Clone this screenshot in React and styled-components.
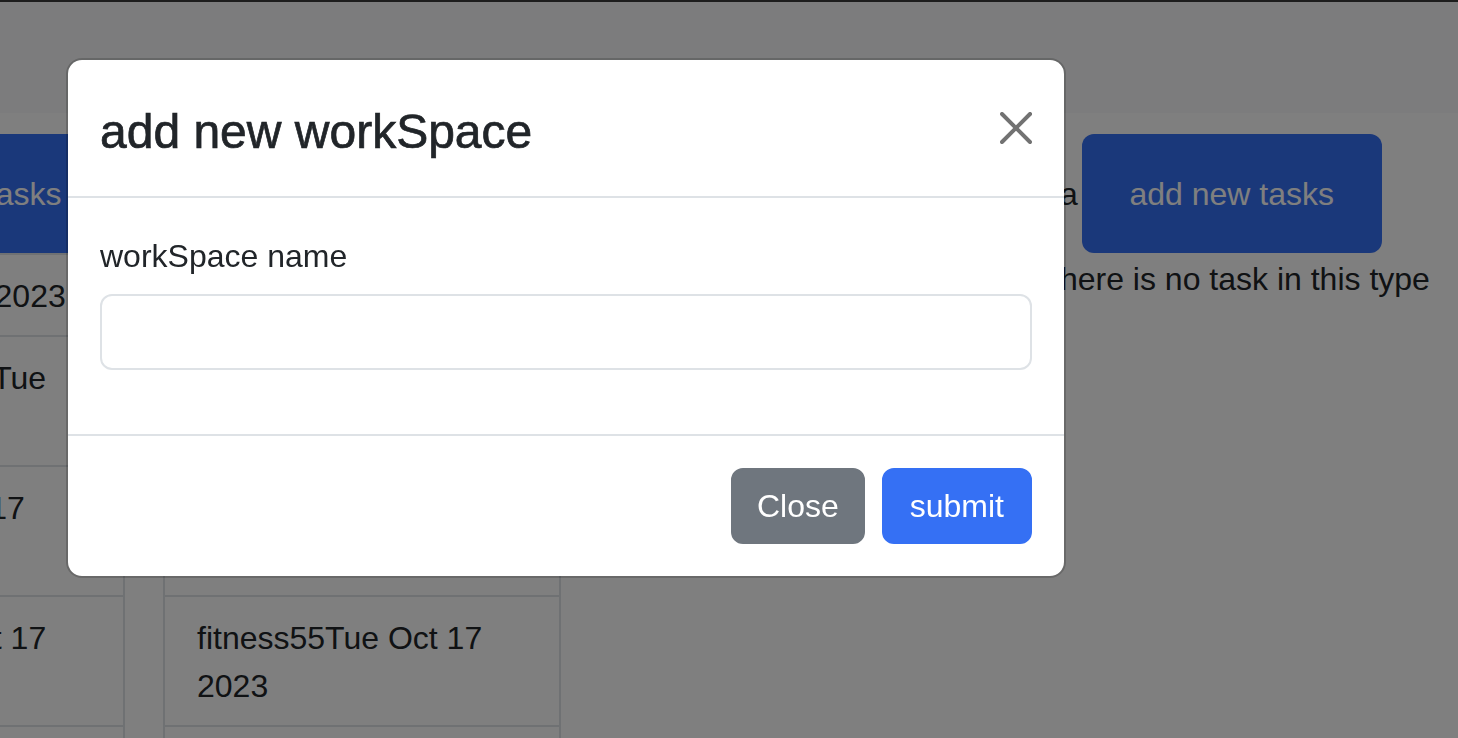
import React from "react";
import styled, { createGlobalStyle } from "styled-components";

const GlobalStyle = createGlobalStyle`
  html, body {
    margin: 0;
    padding: 0;
    background: #fff;
  }
  body {
    font-family: "Liberation Sans", Arial, sans-serif;
    font-size: 32px;
    line-height: 1.5;
    color: #212529;
    overflow: hidden;
  }
  * {
    box-sizing: border-box;
  }
`;

const Page = styled.div`
  width: 1458px;
  height: 738px;
  overflow: hidden;
`;

const NavBar = styled.nav`
  height: 113px;
  background: #f8f9fa;
  border-top: 2px solid #3a3a3a;
`;

// board is scrolled sideways, first column is partly off screen
const Board = styled.div`
  display: flex;
  align-items: flex-start;
  gap: 38px;
  margin-left: -273px;
  padding: 21px 9px 0 0;
`;

const Column = styled.section`
  flex: 0 0 398px;
  display: flex;
  flex-direction: column;
  margin-left: ${({ $push }) => ($push ? "auto" : "0")};
`;

const ColumnHeader = styled.div`
  display: flex;
  align-items: center;
  gap: 4px;
`;

const ColumnTitle = styled.span`
  white-space: nowrap;
`;

const AddButton = styled.button`
  flex: 0 0 300px;
  height: 119px;
  border: none;
  border-radius: 12px;
  background: #3570f4;
  color: #fff;
  font-family: inherit;
  font-size: 32px;
  line-height: 48px;
`;

const TaskList = styled.ul`
  margin: 0;
  padding: 0;
  list-style: none;
`;

const TaskItem = styled.li`
  padding: 17px 32px 15px;
  background: #fff;
  border: 2px solid #dee2e6;
  & + & {
    border-top-width: 0;
  }
`;

const EmptyNote = styled.p`
  margin: 0;
  padding-top: 2px;
  white-space: nowrap;
`;

const Overlay = styled.div`
  position: fixed;
  inset: 0;
  background: rgba(0, 0, 0, 0.5);
  padding: 58px 0 0 66px;
`;

const Dialog = styled.div`
  width: 1000px;
  background: #fff;
  background-clip: padding-box;
  border: 2px solid rgba(0, 0, 0, 0.175);
  border-radius: 16px;
`;

const DialogHeader = styled.div`
  display: flex;
  align-items: center;
  justify-content: space-between;
  padding: 32px;
  border-bottom: 2px solid #dee2e6;
`;

const DialogTitle = styled.h4`
  margin: 0;
  padding-top: 4px;
  height: 72px;
  font-size: 48px;
  line-height: 72px;
  font-weight: 500;
  -webkit-text-stroke: 0.7px #212529;
`;

const CloseX = styled.button`
  width: 48px;
  height: 48px;
  padding: 8px;
  margin-right: -8px;
  border: none;
  background: transparent;
  opacity: 0.55;
  display: flex;
  svg {
    width: 32px;
    height: 32px;
  }
`;

const DialogBody = styled.div`
  padding: 32px;
`;

const FieldGroup = styled.div`
  margin-bottom: 32px;
`;

const FieldLabel = styled.label`
  display: block;
  padding-top: 2px;
  height: 48px;
  margin-bottom: 16px;
`;

const TextInput = styled.input`
  display: block;
  width: 100%;
  height: 76px;
  padding: 12px 24px;
  border: 2px solid #dee2e6;
  border-radius: 12px;
  font-family: inherit;
  font-size: 32px;
  outline: none;
`;

const DialogFooter = styled.div`
  display: flex;
  justify-content: flex-end;
  gap: 17px;
  padding: 32px;
  border-top: 2px solid #dee2e6;
`;

const ActionButton = styled.button`
  padding: 12px ${({ $wide }) => ($wide ? "26px" : "24px")};
  border: 2px solid ${({ $tone }) => $tone};
  background: ${({ $tone }) => $tone};
  border-radius: 12px;
  color: #fff;
  font-family: inherit;
  font-size: 32px;
  line-height: 48px;
`;

const columns = [
  {
    title: "doing",
    tasks: [
      "workTue Oct 17 2023",
      "finish homeworkTue Oct 17 2023",
      "readingTue Oct 17 2023",
      "fitness55Tue Oct 17 2023",
      "workTue Oct 17 2023",
    ],
  },
  {
    title: "todo",
    tasks: [
      "workTue Oct 17 2023",
      "finish homeworkTue Oct 17 2023",
      "readingTue Oct 17 2023",
      "fitness55Tue Oct 17 2023",
      "workTue Oct 17 2023",
    ],
  },
  { title: "ta", tasks: [] },
];

const App = () => {
  return (
    <Page>
      <GlobalStyle />
      <NavBar />
      <Board>
        {columns.map((col, i) => (
          <Column key={i} $push={i === columns.length - 1}>
            <ColumnHeader>
              <ColumnTitle>{col.title}</ColumnTitle>
              <AddButton>add new tasks</AddButton>
            </ColumnHeader>
            {col.tasks.length ? (
              <TaskList>
                {col.tasks.map((t, j) => (
                  <TaskItem key={j}>{t}</TaskItem>
                ))}
              </TaskList>
            ) : (
              <EmptyNote>there is no task in this type</EmptyNote>
            )}
          </Column>
        ))}
      </Board>

      <Overlay>
        <Dialog>
          <DialogHeader>
            <DialogTitle>add new workSpace</DialogTitle>
            <CloseX aria-label="Close">
              <svg viewBox="0 0 16 16">
                <path
                  fill="#000"
                  d="M.293.293a1 1 0 0 1 1.414 0L8 6.586 14.293.293a1 1 0 1 1 1.414 1.414L9.414 8l6.293 6.293a1 1 0 0 1-1.414 1.414L8 9.414l-6.293 6.293a1 1 0 0 1-1.414-1.414L6.586 8 .293 1.707a1 1 0 0 1 0-1.414z"
                />
              </svg>
            </CloseX>
          </DialogHeader>
          <DialogBody>
            <FieldGroup>
              <FieldLabel>workSpace name</FieldLabel>
              <TextInput type="text" />
            </FieldGroup>
          </DialogBody>
          <DialogFooter>
            <ActionButton $tone="#6f767e">Close</ActionButton>
            <ActionButton $tone="#3570f4" $wide>
              submit
            </ActionButton>
          </DialogFooter>
        </Dialog>
      </Overlay>
    </Page>
  );
};

export default App;
